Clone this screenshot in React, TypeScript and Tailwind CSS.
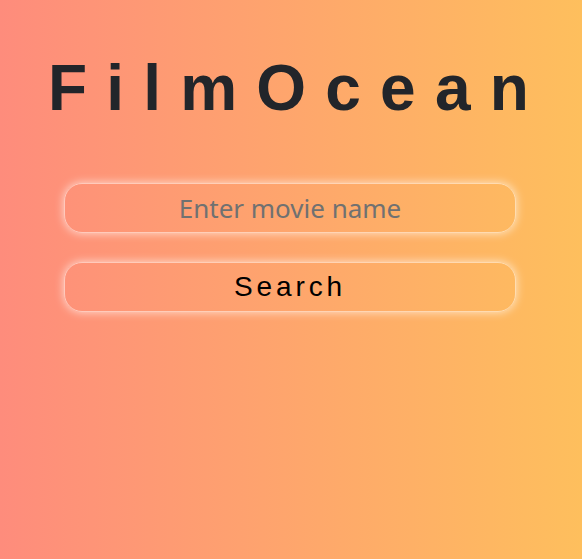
export default function App() {
  return (
    <div className="min-h-screen bg-[linear-gradient(to_right,#fe8c7c,#febf5d)] font-['Liberation_Sans',Arial,sans-serif]">
      <div className="flex flex-col items-center pt-[50px] pr-[2px]">
        {/* Title */}
        <h1 className="text-[64px] font-bold leading-[76px] tracking-[0.3em] text-[#22252a] pl-[0.25em]">
          FilmOcean
        </h1>

        {/* Search form */}
        <div className="mt-[57px] flex w-[452px] flex-col gap-[29px]">
          <input
            type="text"
            placeholder="Enter movie name"
            className="h-[50px] w-full rounded-[18px] border border-white/50 bg-transparent text-center text-[26px] text-black outline-none shadow-[0_0_10px_rgba(255,255,255,0.7)] placeholder:text-[#707171] font-['Comic_Sans_MS','Noto_Sans',sans-serif]"
          />
          <button className="h-[50px] w-full rounded-[18px] border border-white/50 bg-transparent text-[28px] tracking-[0.14em] text-black shadow-[0_0_10px_rgba(255,255,255,0.7)]">
            Search
          </button>
        </div>
      </div>
    </div>
  )
}
